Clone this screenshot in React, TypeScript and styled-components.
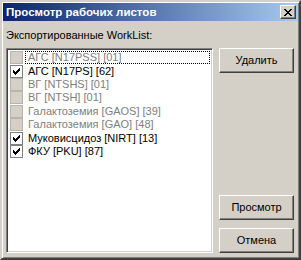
import React from 'react';
import styled, { createGlobalStyle } from 'styled-components';

const GlobalStyle = createGlobalStyle`
  html, body {
    margin: 0;
    padding: 0;
    background: #d4d0c8;
  }
  * {
    box-sizing: border-box;
  }
`;

interface WorkItem {
  label: string;
  checked: boolean;
  disabled: boolean;
}

const items: WorkItem[] = [
  { label: 'АГС [N17PSS] [01]', checked: false, disabled: true },
  { label: 'АГС [N17PS] [62]', checked: true, disabled: false },
  { label: 'ВГ [NTSHS] [01]', checked: false, disabled: true },
  { label: 'ВГ [NTSH] [01]', checked: false, disabled: true },
  { label: 'Галактоземия [GAOS] [39]', checked: false, disabled: true },
  { label: 'Галактоземия [GAO] [48]', checked: false, disabled: true },
  { label: 'Муковисцидоз [NIRT] [13]', checked: true, disabled: false },
  { label: 'ФКУ [PKU] [87]', checked: true, disabled: false },
];

const CheckMark = () => (
  <svg width="7" height="7" viewBox="0 0 7 7" shapeRendering="crispEdges">
    <path
      fill="#000"
      d="M0 2h1v3H0z M1 3h1v3H1z M2 4h1v3H2z M3 3h1v3H3z M4 2h1v3H4z M5 1h1v3H5z M6 0h1v3H6z"
    />
  </svg>
);

const CloseGlyph = () => (
  <svg width="8" height="7" viewBox="0 0 8 7" shapeRendering="crispEdges">
    <path
      fill="#000"
      d="M0 0h2v1H0z M6 0h2v1H6z M1 1h2v1H1z M5 1h2v1H5z M2 2h4v1H2z M3 3h2v1H3z M2 4h4v1H2z M1 5h2v1H1z M5 5h2v1H5z M0 6h2v1H0z M6 6h2v1H6z"
    />
  </svg>
);

export default function App() {
  return (
    <>
      <GlobalStyle />
      <Window>
        <TitleBar>
          <Title>Просмотр рабочих листов</Title>
          <CloseButton>
            <CloseGlyph />
          </CloseButton>
        </TitleBar>
        <Body>
          <LeftColumn>
            <Caption>Экспортированные WorkList:</Caption>
            <ListBox>
              {items.map((item, i) => (
                <Row key={item.label}>
                  <Box disabled={item.disabled}>{item.checked && <CheckMark />}</Box>
                  <ItemText disabled={item.disabled} focused={i === 0}>
                    {item.label}
                  </ItemText>
                </Row>
              ))}
            </ListBox>
          </LeftColumn>
          <ButtonColumn>
            <Button>Удалить</Button>
            <Spacer />
            <Button>Просмотр</Button>
            <Button>Отмена</Button>
          </ButtonColumn>
        </Body>
      </Window>
    </>
  );
}

const Window = styled.div`
  width: 301px;
  height: 260px;
  background: #d4d0c8;
  border: 2px solid;
  border-color: #d4d0c8 #404040 #404040 #d4d0c8;
  box-shadow: inset 1px 1px 0 #ffffff, inset -1px -1px 0 #808080;
  padding: 1px;
  display: flex;
  flex-direction: column;
  font-family: 'Liberation Sans', Arial, sans-serif;
  font-size: 11px;
  color: #000;
`;

const TitleBar = styled.div`
  height: 18px;
  flex: none;
  display: flex;
  align-items: center;
  justify-content: space-between;
  padding: 0 2px 0 3px;
  background: linear-gradient(to right, #0a246a, #a6caf0);
`;

const Title = styled.span`
  color: #ffffff;
  font-weight: bold;
  font-size: 11.5px;
  white-space: nowrap;
`;

const CloseButton = styled.div`
  width: 16px;
  height: 14px;
  background: #d4d0c8;
  display: flex;
  align-items: center;
  justify-content: center;
  border: 1px solid;
  border-color: #ffffff #404040 #404040 #ffffff;
  box-shadow: inset -1px -1px 0 #808080;
  padding-right: 1px;
`;

const Body = styled.div`
  flex: 1;
  display: grid;
  grid-template-columns: 207px 75px;
  column-gap: 6px;
  padding: 8px 4px 4px 3px;
`;

const LeftColumn = styled.div`
  display: flex;
  flex-direction: column;
`;

const Caption = styled.div`
  line-height: 13px;
  height: 13px;
  margin-bottom: 6px;
  white-space: nowrap;
`;

const ListBox = styled.div`
  flex: 1;
  background: #ffffff;
  border: 1px solid;
  border-color: #808080 #ffffff #ffffff #808080;
  box-shadow: inset 1px 1px 0 #404040, inset -1px -1px 0 #d4d0c8;
  padding: 2px;
`;

const Row = styled.div`
  height: 13.4px;
  display: flex;
  align-items: center;
`;

const Box = styled.div<{ disabled: boolean }>`
  width: 13px;
  height: 13px;
  flex: none;
  margin-left: 1px;
  border: 1px solid ${p => (p.disabled ? '#b8b4ac' : '#808080')};
  background: ${p => (p.disabled ? '#d4d0c8' : '#ffffff')};
  display: flex;
  align-items: center;
  justify-content: center;
`;

const ItemText = styled.div<{ disabled: boolean; focused: boolean }>`
  flex: 1;
  height: 13px;
  line-height: 11px;
  margin-left: 2px;
  padding-left: 2px;
  white-space: nowrap;
  color: ${p => (p.disabled ? '#808080' : '#000000')};
  border: 1px dotted ${p => (p.focused ? '#000000' : 'transparent')};
`;

const ButtonColumn = styled.div`
  display: flex;
  flex-direction: column;
  gap: 8px;
  padding-top: 19px;
`;

const Spacer = styled.div`
  flex: 1;
`;

const Button = styled.div`
  height: 25px;
  background: #d4d0c8;
  border: 1px solid;
  border-color: #ffffff #404040 #404040 #ffffff;
  box-shadow: inset -1px -1px 0 #808080;
  display: flex;
  align-items: center;
  justify-content: center;
  padding-bottom: 1px;
`;
